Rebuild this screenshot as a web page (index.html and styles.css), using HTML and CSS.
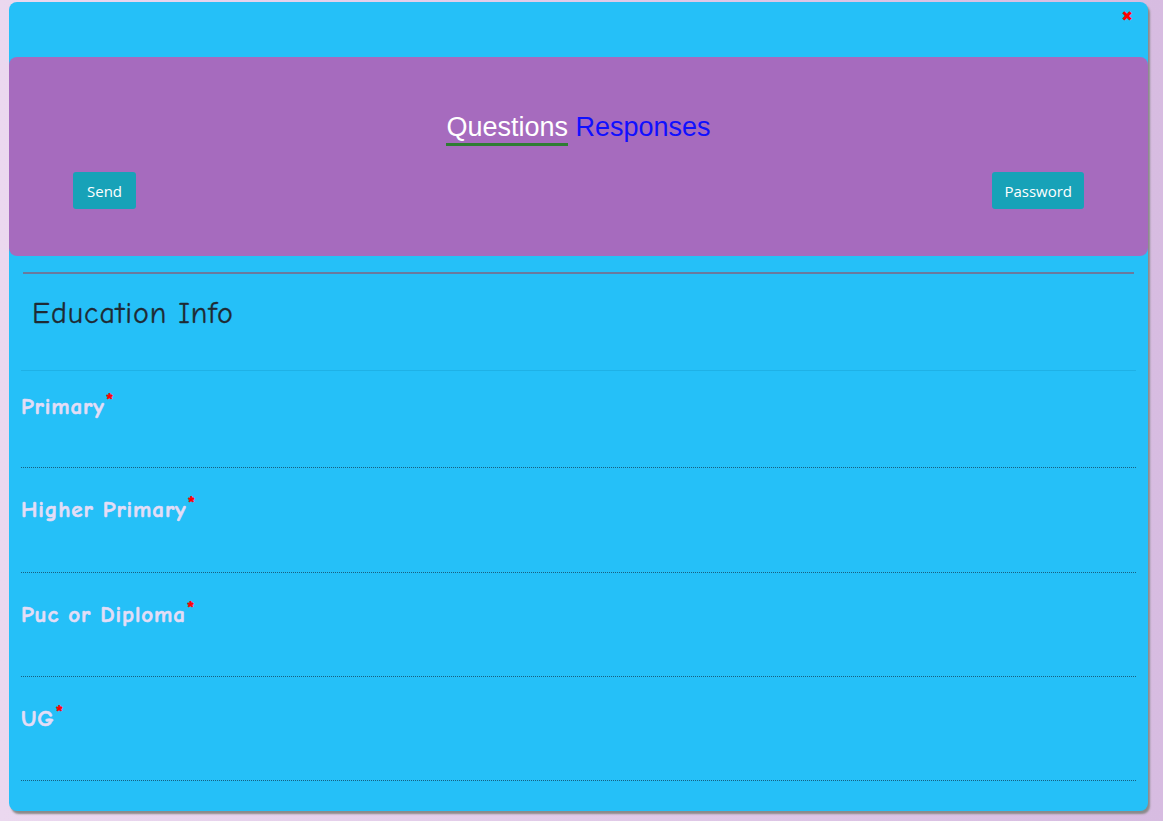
FILE: index.html
```html
<!DOCTYPE html>
<html>
<head>
<meta charset="utf-8">
<link rel="stylesheet" href="styles.css">
</head>
<body>
<div class="card">
  <div class="topbar"><span class="close">✖</span></div>
  <div class="header">
    <div class="tabs"><span class="tab active">Questions</span> <span class="tab">Responses</span></div>
    <div class="actions">
      <button class="btn btn-send">Send</button>
      <button class="btn btn-pass">Password</button>
    </div>
  </div>
  <div class="rule"></div>
  <div class="title-wrap"><h2 class="title">Education Info</h2></div>
  <div class="form">
    <div class="field first"><label class="label">Primary<sup class="req">*</sup></label><div class="input"></div></div>
    <div class="field second"><label class="label">Higher Primary<sup class="req">*</sup></label><div class="input"></div></div>
    <div class="field"><label class="label">Puc or Diploma<sup class="req">*</sup></label><div class="input"></div></div>
    <div class="field"><label class="label">UG<sup class="req">*</sup></label><div class="input"></div></div>
  </div>
</div>
</body>
</html>
```
FILE: styles.css
```css
html, body { height: 100%; }
body {
  margin: 0;
  padding: 2px 15px 10px 9px;
  box-sizing: border-box;
  background: linear-gradient(to right, #ebd8ef, #d7bce1);
  font-family: "Liberation Sans", Arial, sans-serif;
}
.card {
  width: 1139px;
  height: 809px;
  box-sizing: border-box;
  background: #25c0f8;
  border-radius: 8px;
  box-shadow: 2px 3px 2px #8a8a8a;
  overflow: hidden;
  display: flex;
  flex-direction: column;
}
.topbar {
  height: 55px;
  display: flex;
  justify-content: flex-end;
  align-items: flex-start;
  padding-right: 15px;
}
.close {
  color: #ff0000;
  font-size: 14px;
  line-height: 1;
  margin-top: 7px;
  font-family: "DejaVu Sans", sans-serif;
  font-weight: bold;
}
.header {
  height: 199px;
  background: #a66bbe;
  border-radius: 8px;
  display: flex;
  flex-direction: column;
  align-items: center;
  padding-top: 55px;
  box-sizing: border-box;
}
.tabs {
  font-size: 27px;
  line-height: 31px;
  white-space: nowrap;
}
.tab { color: #1010ff; }
.tab.active {
  color: #ffffff;
  border-bottom: 3px solid #2e7d32;
  padding-bottom: 1px;
}
.actions {
  width: 100%;
  box-sizing: border-box;
  display: flex;
  justify-content: space-between;
  padding: 0 64px 0 64px;
  margin-top: 29px;
}
.btn {
  background: #17a2b8;
  color: #fff;
  border: none;
  border-radius: 3px;
  height: 37px;
  padding: 0 13px;
  font-family: "Open Sans", sans-serif;
  font-size: 15px;
}
.btn-send { padding: 0 14px; }
.btn-pass { padding: 0 12px; }
.rule {
  height: 2px;
  background: #6a7a9d;
  margin: 16px 14px 0 14px;
}
.title-wrap {
  height: 97px;
  border-bottom: 1px solid #1fb1e6;
  margin: 0 12px;
  box-sizing: border-box;
  padding: 22px 0 0 11px;
}
.title {
  margin: 0;
  font-family: "Comic Sans MS", "Comic Neue", "DejaVu Sans", sans-serif;
  font-weight: normal;
  font-size: 30px;
  color: #1f2a33;
  letter-spacing: 0.9px;
  -webkit-text-stroke: 0.3px #1f2a33;
}
.form { margin: 0 12px; }
.field {
  height: 104px;
  border-bottom: 1px dotted #175f80;
  box-sizing: border-box;
  padding-top: 28px;
}
.field.first { height: 97px; padding-top: 22px; }
.field.second { height: 105px; }
.label {
  font-family: "Comic Sans MS", "Comic Neue", "DejaVu Sans", sans-serif;
  font-weight: bold;
  font-size: 23px;
  color: #e4ddf6;
  letter-spacing: 0.9px;
  -webkit-text-stroke: 0.6px #e4ddf6;
}
.req {
  color: #ff0000;
  font-size: 20px;
  vertical-align: 7px;
  line-height: 0;
  -webkit-text-stroke: 0.5px #ff0000;
  margin-left: 1px;
}
```
